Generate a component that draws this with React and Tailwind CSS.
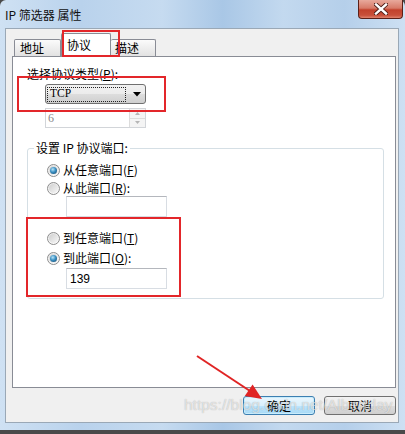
import React from "react";

const U = ({ children }) => <span className="underline underline-offset-1">{children}</span>;

function Radio({ checked }) {
  return (
    <span className="relative inline-flex w-[13px] h-[13px] shrink-0 rounded-full border border-[#8d8d8d] bg-gradient-to-b from-[#e9e9e9] to-[#fbfbfb] items-center justify-center">
      <span className="w-[9px] h-[9px] rounded-full bg-gradient-to-br from-[#cfcfcf] to-[#f7f7f7] flex items-center justify-center">
        {checked && (
          <span className="w-[7px] h-[7px] rounded-full bg-[radial-gradient(circle_at_40%_35%,#b8e3f7_0%,#3a8fc2_45%,#0e3e63_100%)]" />
        )}
      </span>
    </span>
  );
}

function RadioRow({ checked, children, className = "" }) {
  return (
    <div className={"flex items-center h-[16px] pl-[19px] gap-[3px] " + className}>
      <Radio checked={checked} />
      <span className="leading-[16px] whitespace-nowrap">{children}</span>
    </div>
  );
}

function TextBox({ value, className = "" }) {
  return (
    <div
      className={
        "ml-[38px] w-[101px] h-[21px] bg-white border border-[#d8dde3] border-t-[#b4b7bd] flex items-center pl-[3px] font-['Liberation_Sans',sans-serif] text-[12px] " +
        className
      }
    >
      {value}
    </div>
  );
}

export default function App() {
  return (
    <div className="relative w-[405px] h-[434px] overflow-hidden bg-[#4a4a4a] text-[12px] text-black font-['Noto_Sans_CJK_SC',sans-serif]">
      <div className="w-[405px] h-[430px] rounded-t-[6px] px-[5px] flex flex-col bg-[linear-gradient(to_right,#cfe1f3_0%,#b9d2ec_20%,#c6dbf0_40%,#a9c7e6_55%,#c3d9ef_70%,#b5cfea_85%,#cde0f3_100%)]">
        {/* title bar */}
        <div className="h-[28px] flex items-center shrink-0">
          <span className="leading-[16px] pt-[1px] text-[12px] text-[#111]">IP 筛选器 属性</span>
        </div>

        {/* client area */}
        <div className="w-[394px] h-[395px] bg-[#f0f0f0] border border-[#9aa8b6] flex flex-col">
          {/* tabs */}
          <div className="mt-[4px] ml-[8px] h-[23px] flex items-end">
            <div className="w-[47px] h-[17px] border border-b-0 border-[#898c95] bg-gradient-to-b from-[#fbfbfb] to-[#e2e2e2] pl-[5px] leading-[15px] rounded-t-[2px]">
              地址
            </div>
            <div className="relative z-10 w-[50px] h-[24px] mb-[-1px] border border-b-0 border-[#898c95] bg-white pl-[5px] pt-[3px] leading-[15px] rounded-t-[2px]">
              协议
            </div>
            <div className="w-[45px] h-[17px] border border-b-0 border-l-0 border-[#898c95] bg-gradient-to-b from-[#fbfbfb] to-[#e2e2e2] pl-[4px] leading-[15px] rounded-t-[2px]">
              描述
            </div>
          </div>

          {/* panel */}
          <div className="ml-[6px] w-[384px] h-[332px] border border-[#898c95] bg-white flex flex-col">
            <div className="ml-[14px] mt-[9px] h-[16px] leading-[16px] whitespace-nowrap">
              选择协议类型(<U>P</U>):
            </div>

            {/* dropdown */}
            <div className="ml-[32px] mt-[2px] w-[101px] h-[20px] rounded-[3px] border border-[#707070] bg-[linear-gradient(to_bottom,#f2f2f2_0%,#ebebeb_50%,#dddddd_51%,#cfcfcf_100%)] flex items-center pl-[1px] pr-[4px]">
              <div className="w-[79px] h-[15px] border border-dotted border-[#222] flex items-center pl-[2px] font-['Liberation_Serif',serif] text-[11.5px] leading-none">
                TCP
              </div>
              <div className="flex-1 flex justify-end">
                <svg width="8" height="5" viewBox="0 0 8 5">
                  <polygon points="0,0 8,0 4,4.5" fill="#000" />
                </svg>
              </div>
            </div>

            {/* spin box (disabled) */}
            <div className="ml-[32px] mt-[4px] w-[101px] h-[20px] border border-[#d2d5d9] bg-white flex">
              <div className="flex-1 pl-[2px] flex items-center font-['Liberation_Serif',serif] text-[12px] text-[#8a8a8a]">6</div>
              <div className="w-[16px] flex flex-col border-l border-[#dcdcdc]">
                <div className="flex-1 flex items-center justify-center border-b border-[#dcdcdc] bg-[#f4f4f4]">
                  <svg width="5" height="3" viewBox="0 0 5 3"><polygon points="0,3 5,3 2.5,0" fill="#b5b5b5" /></svg>
                </div>
                <div className="flex-1 flex items-center justify-center bg-[#f4f4f4]">
                  <svg width="5" height="3" viewBox="0 0 5 3"><polygon points="0,0 5,0 2.5,3" fill="#b5b5b5" /></svg>
                </div>
              </div>
            </div>

            {/* group box */}
            <div className="relative ml-[14px] mt-[20px] w-[357px] h-[151px] border border-[#d5dfe5] rounded-[3px] shadow-[inset_1px_1px_0_#ffffff] flex flex-col">
              <div className="absolute left-[6px] top-[-9px] bg-white px-[2px] leading-[16px] whitespace-nowrap">
                设置 IP 协议端口:
              </div>
              <RadioRow checked className="mt-[13px]">
                从任意端口(<U>F</U>)
              </RadioRow>
              <RadioRow className="mt-[2px]">
                从此端口(<U>R</U>):
              </RadioRow>
              <TextBox value="" />
              <RadioRow className="mt-[13px]">
                到任意端口(<U>T</U>)
              </RadioRow>
              <RadioRow checked className="mt-[4px]">
                到此端口(<U>O</U>):
              </RadioRow>
              <TextBox value="139" className="mt-[2px]" />
            </div>
          </div>

          {/* buttons */}
          <div className="mt-[8px] pr-[2px] flex justify-end gap-[9px]">
            <button className="w-[72px] h-[19px] rounded-[3px] border border-[#3c7fb1] bg-[linear-gradient(to_bottom,#eaf6fd_0%,#d9f0fc_50%,#bee6fd_51%,#a7d9f5_100%)] shadow-[inset_0_0_0_1px_#c8ecfc] text-[12px] leading-[17px]">
              确定
            </button>
            <button className="w-[72px] h-[19px] rounded-[3px] border border-[#707070] bg-[linear-gradient(to_bottom,#f2f2f2_0%,#ebebeb_50%,#dddddd_51%,#cfcfcf_100%)] text-[12px] leading-[17px]">
              取消
            </button>
          </div>
        </div>
      </div>

      {/* close button */}
      <div className="absolute top-0 left-[358px] w-[45px] h-[19px] rounded-b-[4px] border border-t-0 border-[#5b2018] bg-[linear-gradient(to_bottom,#e8a99c_0%,#d77a68_45%,#c2412c_55%,#c8503a_85%,#e0836e_100%)] flex items-center justify-center">
        <svg width="14" height="12" viewBox="0 0 14 12">
          <path d="M2 1.5 L12 10.5 M12 1.5 L2 10.5" stroke="#4a1a14" strokeWidth="4.2" strokeLinecap="square" />
          <path d="M2 1.5 L12 10.5 M12 1.5 L2 10.5" stroke="#ffffff" strokeWidth="2.4" strokeLinecap="square" />
        </svg>
      </div>

      {/* red annotation boxes */}
      <div className="absolute left-[62px] top-[30px] w-[58px] h-[27px] border-2 border-[#e3262a] pointer-events-none z-20" />
      <div className="absolute left-[17px] top-[76px] w-[149px] h-[36px] border-2 border-[#e3262a] pointer-events-none z-20" />
      <div className="absolute left-[26px] top-[217px] w-[155px] h-[80px] border-2 border-[#e3262a] pointer-events-none z-20" />

      {/* red arrow */}
      <svg className="absolute inset-0 pointer-events-none z-20" width="405" height="434" viewBox="0 0 405 434">
        <line x1="197" y1="356" x2="250" y2="391" stroke="#e02424" strokeWidth="2" />
        <polygon points="262,399 244.8,396 252.6,384.4" fill="#e02424" />
      </svg>

      {/* watermark */}
      <div className="absolute left-[184px] top-[396px] font-['Liberation_Sans',sans-serif] text-[15.5px] leading-[18px] text-white/60 [text-shadow:0_0_1px_rgba(0,0,0,0.3)] pointer-events-none z-20 whitespace-nowrap">
        https://blog.csdn.net/Albertday
      </div>
    </div>
  );
}
